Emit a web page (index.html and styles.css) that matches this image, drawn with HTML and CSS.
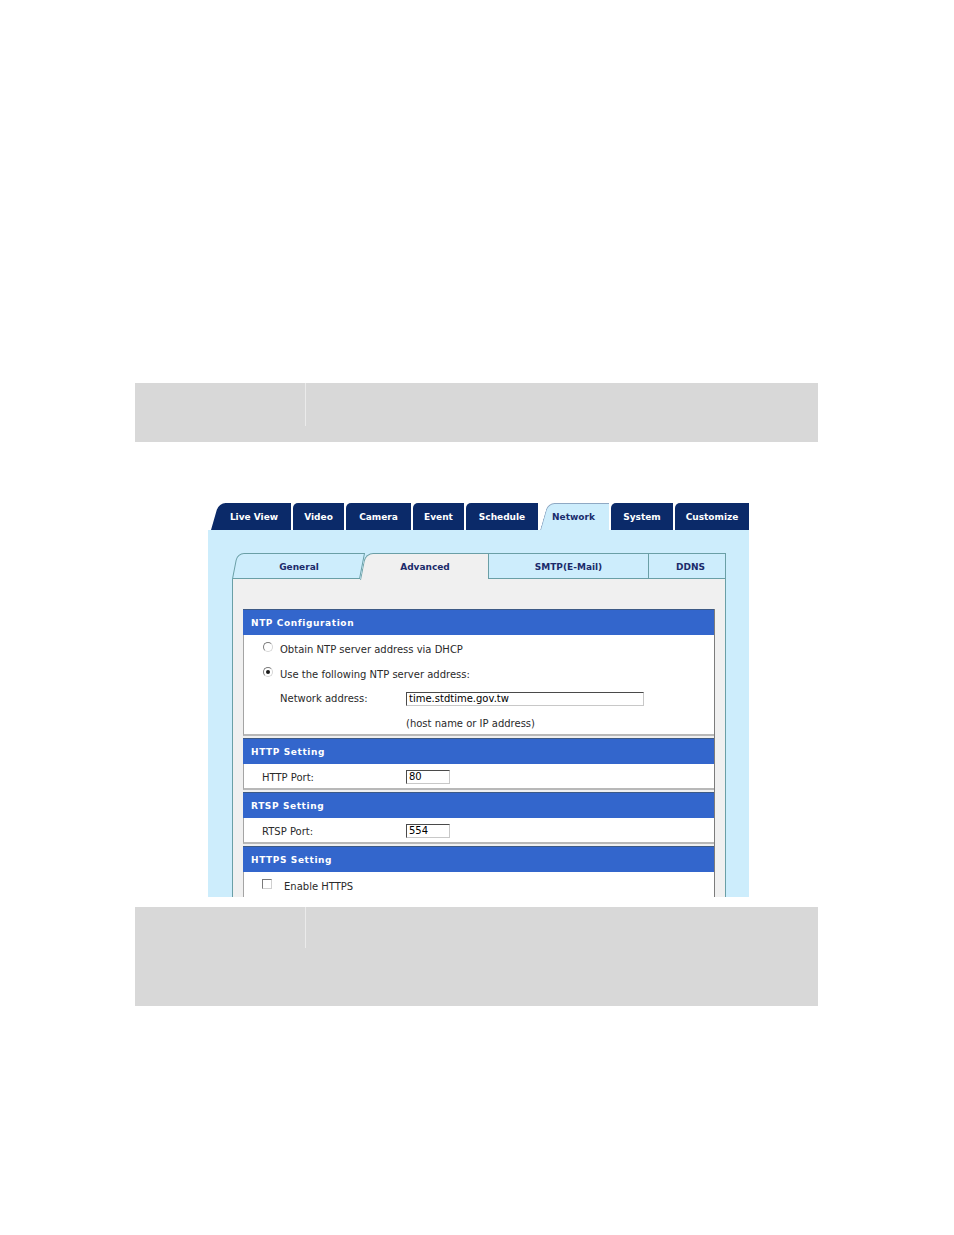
FILE: index.html
```html
<!DOCTYPE html>
<html lang="en">
<head>
<meta charset="utf-8">
<title>Network - Advanced</title>
<link rel="stylesheet" href="styles.css">
</head>
<body>
<div class="page">
  <div class="graybox top"><div class="gcell"></div></div>

  <div class="shot">
    <div class="tabs">
      <div class="tab slant t-live">Live View</div>
      <div class="tab t-video">Video</div>
      <div class="tab t-camera">Camera</div>
      <div class="tab t-event">Event</div>
      <div class="tab t-schedule">Schedule</div>
      <div class="tab slant active t-network">Network</div>
      <div class="tab t-system">System</div>
      <div class="tab t-customize">Customize</div>
    </div>

    <div class="main">
      <div class="subtabs">
        <div class="st general">General</div>
        <div class="st advanced">Advanced</div>
        <div class="st smtp">SMTP(E-Mail)</div>
        <div class="st ddns">DDNS</div>
      </div>

      <div class="panel">
        <div class="sections">
          <div class="sec">
            <div class="hd">NTP Configuration</div>
            <div class="bd">
              <div class="row r-radio"><span class="radio"></span>Obtain NTP server address via DHCP</div>
              <div class="row r-radio"><span class="radio on"></span>Use the following NTP server address:</div>
              <div class="row r-addr"><span class="lbl-addr">Network address:</span><span class="inp wide">time.stdtime.gov.tw</span></div>
              <div class="row r-hint">(host name or IP address)</div>
            </div>
          </div>

          <div class="sec">
            <div class="hd">HTTP Setting</div>
            <div class="bd">
              <div class="row r-port"><span class="lbl-port">HTTP Port:</span><span class="inp short">80</span></div>
            </div>
          </div>

          <div class="sec">
            <div class="hd">RTSP Setting</div>
            <div class="bd">
              <div class="row r-port"><span class="lbl-port">RTSP Port:</span><span class="inp short">554</span></div>
            </div>
          </div>

          <div class="sec">
            <div class="hd">HTTPS Setting</div>
            <div class="bd">
              <div class="row r-check"><span class="check"></span>Enable HTTPS</div>
            </div>
          </div>
        </div>
      </div>
    </div>
  </div>

  <div class="graybox bottom"><div class="gcell"></div></div>
</div>
</body>
</html>
```

FILE: styles.css
```css
html, body {
  margin: 0;
  padding: 0;
  background: #ffffff;
}

body {
  font-family: "DejaVu Sans", Verdana, sans-serif;
  width: 954px;
  height: 1235px;
  overflow: hidden;
}

.page {
  padding-top: 383px;
}

/* gray placeholder boxes */
.graybox {
  width: 683px;
  margin-left: 135px;
  background: #d8d8d8;
  display: flex;
  align-items: flex-start;
}
.graybox.top {
  height: 59px;
}
.graybox.bottom {
  height: 99px;
  margin-top: 10px;
}
.gcell {
  width: 170px;
  height: 43px;
  border-right: 1px solid #ebebeb;
}
.graybox.bottom .gcell {
  height: 41px;
}

/* screenshot */
.shot {
  margin-top: 60px;
  margin-left: 208px;
  width: 541px;
  height: 395px;
  overflow: hidden;
  background: #cdedfc;
}

/* main tabs */
.tabs {
  display: flex;
  gap: 2px;
  height: 28px;
  box-sizing: border-box;
  padding: 1px 0 0 3px;
  background: #ffffff;
}
.tab {
  position: relative;
  z-index: 0;
  height: 27px;
  display: flex;
  align-items: center;
  justify-content: center;
  color: #ffffff;
  font-weight: bold;
  font-size: 9px;
  box-sizing: border-box;
  padding-top: 1px;
}
.tab::before {
  content: "";
  position: absolute;
  top: 0;
  bottom: 0;
  left: 0;
  right: 0;
  background: #0b2a69;
  border-top-left-radius: 5px;
  z-index: -1;
}
.tab.slant::before {
  right: auto;
  width: 26px;
  transform: skewX(-16deg);
  transform-origin: bottom left;
  border-top-left-radius: 7px;
}
.tab.slant::after {
  content: "";
  position: absolute;
  top: 0;
  bottom: 0;
  left: 14px;
  right: 0;
  background: #0b2a69;
  z-index: -1;
}
.t-live {
  padding-left: 6px;
}
.tab.active {
  color: #1a2c6c;
  padding-left: 0;
  padding-right: 2px;
}
.tab.active::before {
  background: #cdedfc;
  border-top: 1px solid #8fa9c4;
  border-left: 1px solid #8fa9c4;
  box-sizing: border-box;
}
.tab.active::after {
  background: #cdedfc;
  border-top: 1px solid #8fa9c4;
  box-sizing: border-box;
}

.t-live { width: 80px; }
.t-video { width: 51px; }
.t-camera { width: 65px; }
.t-event { width: 51px; }
.t-schedule { width: 72px; }
.t-network { width: 69px; }
.t-system { width: 62px; }
.t-customize { width: 74px; }

/* main area */
.main {
  padding: 23px 23px 0 24px;
}

/* sub tabs */
.subtabs {
  display: flex;
  height: 26px;
}
.st {
  position: relative;
  z-index: 0;
  display: flex;
  align-items: center;
  justify-content: center;
  box-sizing: border-box;
  height: 26px;
  font-size: 9px;
  font-weight: bold;
  color: #1b2b6b;
  padding-top: 1px;
}
.general {
  width: 128px;
  padding-left: 6px;
}
.general::before {
  content: "";
  position: absolute;
  top: 0;
  bottom: 0;
  left: 0;
  right: 0;
  box-sizing: border-box;
  border: 1px solid #6a9fa6;
  background: #cdedfc;
  border-top-left-radius: 7px;
  transform: skewX(-11deg);
  transform-origin: bottom left;
  z-index: -1;
}
.advanced {
  width: 128px;
  padding-left: 2px;
}
.advanced::before {
  content: "";
  position: absolute;
  top: 0;
  bottom: -1px;
  left: 0;
  right: -8px;
  box-sizing: border-box;
  border-top: 1px solid #6a9fa6;
  border-left: 1px solid #6a9fa6;
  background: #f0f0f0;
  border-top-left-radius: 8px;
  transform: skewX(-11deg);
  transform-origin: bottom left;
  z-index: -1;
}
.smtp {
  width: 161px;
  background: #cdedfc;
  border: 1px solid #6a9fa6;
}
.ddns {
  width: 77px;
  background: #cdedfc;
  border: 1px solid #6a9fa6;
  border-left: none;
  padding-left: 7px;
}

/* content panel */
.panel {
  width: 494px;
  box-sizing: border-box;
  background: #f0f0f0;
  border-left: 1px solid #6a9fa6;
  border-right: 1px solid #6a9fa6;
  padding: 30px 10px 0 10px;
  height: 330px;
}

.sections {
  border-right: 1px solid #7c7c7c;
}
.sec {
  margin-bottom: 2px;
}
.hd {
  height: 26px;
  box-sizing: border-box;
  background: #3366cc;
  border-top: 1px solid #3d5a86;
  color: #ffffff;
  font-size: 9px;
  font-weight: bold;
  letter-spacing: 0.6px;
  padding-left: 8px;
  display: flex;
  align-items: center;
}
.bd {
  background: #ffffff;
  border-left: 1px solid #a4a4a4;
  border-bottom: 2px solid #b8b8b8;
  font-size: 10px;
  color: #2a2a2a;
}
.row {
  height: 25px;
  display: flex;
  align-items: center;
  box-sizing: border-box;
  padding-top: 3px;
}
.sec:first-child .row:last-child {
  height: 24px;
}
.r-radio {
  padding-left: 19px;
}
.r-addr {
  padding-left: 36px;
  padding-top: 2px;
}
.r-hint {
  padding-left: 162px;
}
.r-port {
  padding-left: 18px;
  height: 24px;
  padding-top: 2px;
}
.r-check {
  padding-left: 18px;
  padding-top: 4px;
}
.lbl-addr {
  width: 126px;
}
.lbl-port {
  width: 144px;
}

.radio {
  width: 10px;
  height: 10px;
  box-sizing: border-box;
  border-radius: 50%;
  border: 1px solid #7a7a7a;
  border-right-color: #d6d6d6;
  border-bottom-color: #d6d6d6;
  background: #ffffff;
  margin-right: 7px;
  margin-top: -4px;
  display: flex;
  align-items: center;
  justify-content: center;
}
.radio.on::after {
  content: "";
  width: 4px;
  height: 4px;
  border-radius: 50%;
  background: #1a1a1a;
}

.check {
  width: 10px;
  height: 10px;
  box-sizing: border-box;
  border: 1px solid #7a7a7a;
  border-right-color: #d0d0d0;
  border-bottom-color: #d0d0d0;
  background: #ffffff;
  margin-right: 12px;
  margin-top: -5px;
}

.inp {
  height: 14px;
  box-sizing: border-box;
  border: 1px solid #c8c8c8;
  border-top-color: #4a4a4a;
  border-left-color: #4a4a4a;
  background: #ffffff;
  color: #000000;
  font-size: 10px;
  line-height: 12px;
  padding-left: 2px;
  display: flex;
  align-items: center;
}
.inp.wide {
  width: 238px;
}
.inp.short {
  width: 44px;
}
```
